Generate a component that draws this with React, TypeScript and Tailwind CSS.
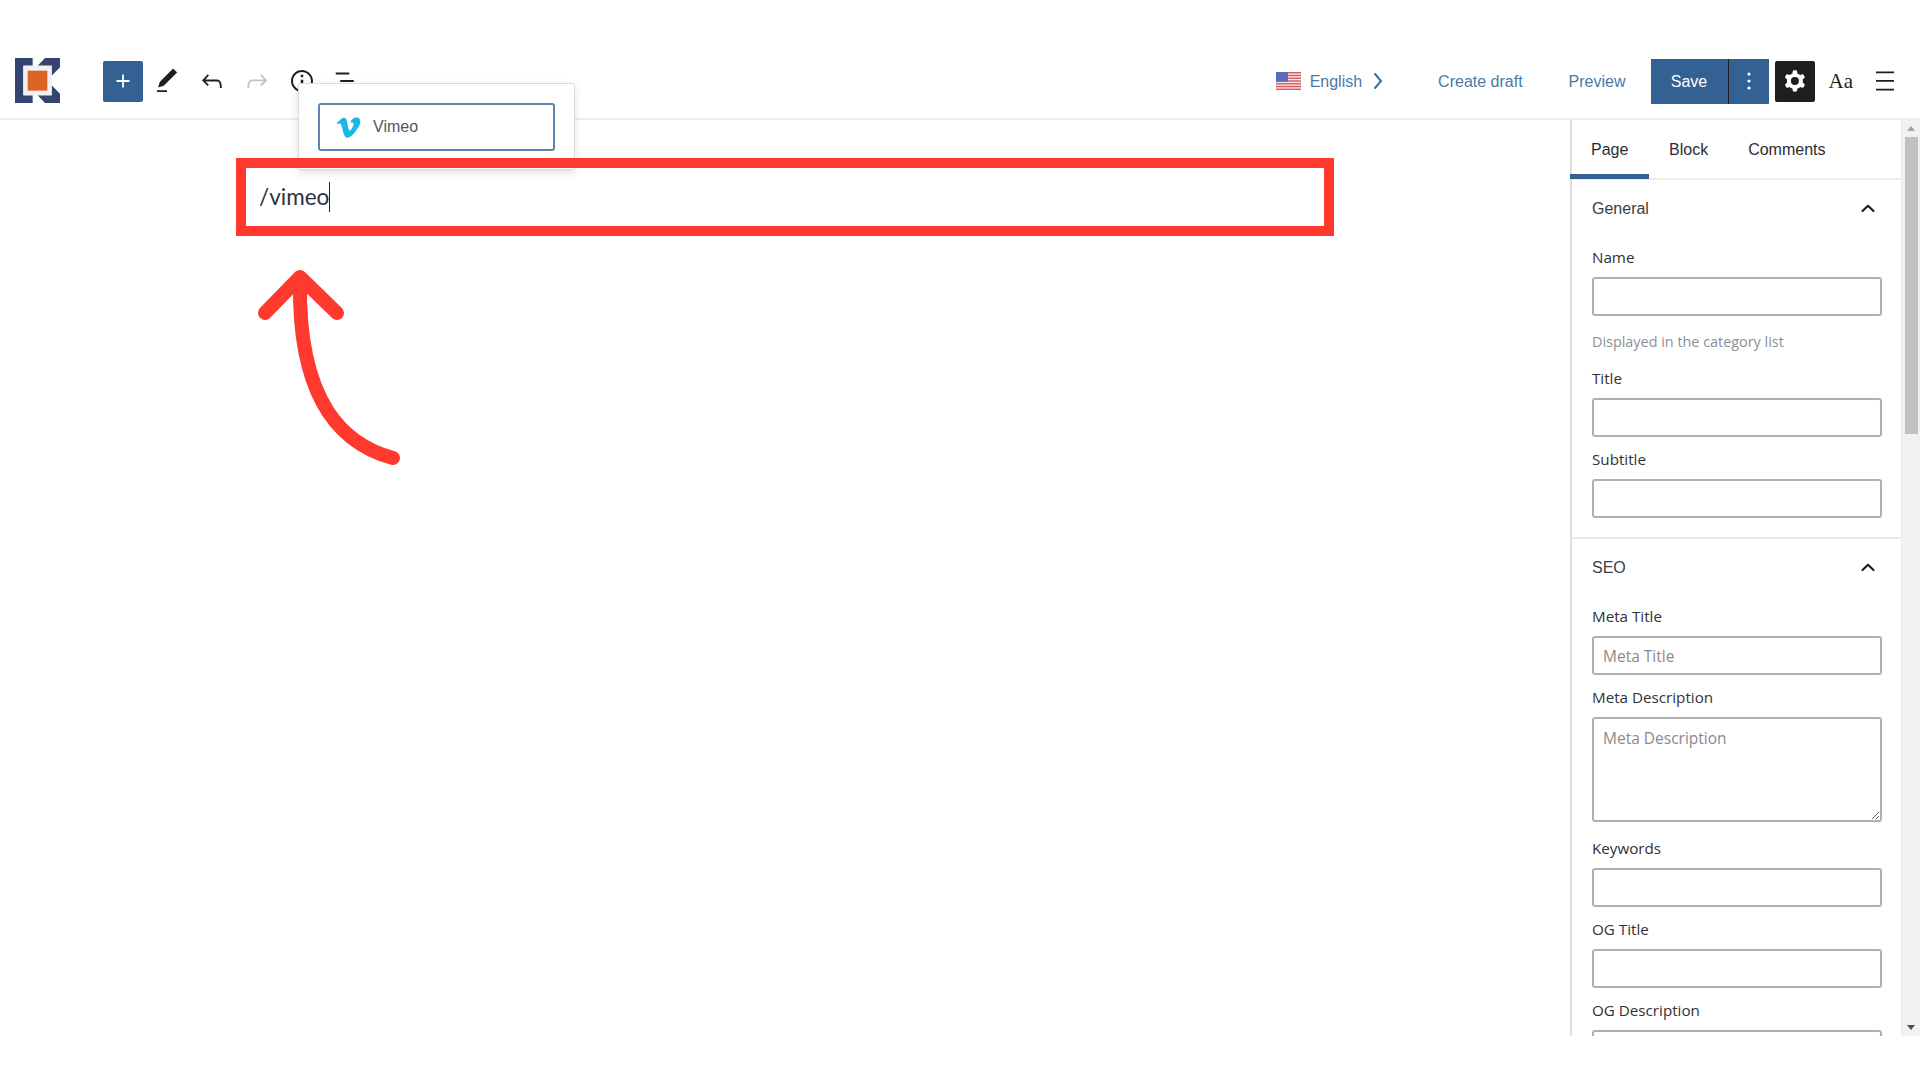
import { FaVimeoV } from "react-icons/fa";

const ink = "#1e1e1e";

function WpIcon({ d, color = ink, size = 30 }: { d: string; color?: string; size?: number }) {
  return (
    <svg width={size} height={size} viewBox="0 0 24 24" fill={color} fillRule="evenodd">
      <path d={d} />
    </svg>
  );
}

const toolbarIcons = [
  { d: "M20.1 5.1L16.9 2 6.2 12.7l-1.3 4.4 4.5-1.3L20.1 5.1zM4 20.8h8v-1.5H4v1.5z", color: ink },
  { d: "M18.3 11.7c-.6-.6-1.4-.9-2.3-.9H6.7l2.9-3.3-1.1-1-4.5 5L8.5 16l1-1-2.7-2.7H16c.5 0 .9.2 1.3.5 1 1 1 3.4 1 4.5v.3h1.5v-.2c0-1.5 0-4.3-1.5-5.7z", color: ink },
  { d: "M15.6 6.5l-1.1 1 2.9 3.3H8c-.9 0-1.7.3-2.3.9-1.4 1.5-1.4 4.2-1.4 5.6v.2h1.5v-.3c0-1.1 0-3.5 1-4.5.3-.3.7-.5 1.3-.5h9.2L14.5 15l1.1 1.1 4.6-4.6-4.6-5z", color: "#c4c4c4" },
  { d: "M12 3.2c-4.8 0-8.8 3.9-8.8 8.8 0 4.8 3.9 8.8 8.8 8.8 4.8 0 8.8-3.9 8.8-8.8 0-4.8-4-8.8-8.8-8.8zm0 16c-4 0-7.2-3.3-7.2-7.2C4.8 8 8 4.8 12 4.8s7.2 3.3 7.2 7.2c0 4-3.2 7.2-7.2 7.2zM11 17h2v-6h-2v6zm0-8h2V7h-2v2z", color: ink },
  { d: "M13.8 5.2H3v1.5h10.8V5.2zm-3.6 12v1.5H21v-1.5H10.2zm7.2-6H6.6v1.5h10.8v-1.5z", color: ink },
];

const cog =
  "M10.289 4.836A1 1 0 0111.275 4h1.306a1 1 0 01.987.836l.244 1.466c.787.26 1.503.679 2.108 1.218l1.393-.522a1 1 0 011.216.437l.653 1.13a1 1 0 01-.23 1.273l-1.148.944a6.025 6.025 0 010 2.435l1.149.946a1 1 0 01.23 1.272l-.653 1.13a1 1 0 01-1.216.437l-1.394-.522c-.605.54-1.32.958-2.108 1.218l-.244 1.466a1 1 0 01-.987.836h-1.306a1 1 0 01-.986-.836l-.244-1.466a5.995 5.995 0 01-2.108-1.218l-1.394.522a1 1 0 01-1.217-.436l-.653-1.131a1 1 0 01.23-1.272l1.149-.946a6.026 6.026 0 010-2.435l-1.148-.944a1 1 0 01-.23-1.272l.653-1.131a1 1 0 011.217-.437l1.393.522a5.994 5.994 0 012.108-1.218l.244-1.466zM14.929 12a3 3 0 11-6 0 3 3 0 016 0z";

function Logo() {
  return (
    <svg width="45" height="45" viewBox="0 0 135 135" className="mb-[2px] shrink-0">
      <path d="M0 0H53V23H25V112H53V135H0Z" fill="#34446e" />
      <path d="M68 23L90 0H135V28L110 53V23Z" fill="#34446e" />
      <path d="M110 82L135 107V135H90L68 112H110Z" fill="#34446e" />
      <rect x="25" y="23" width="85" height="89" fill="#f1f1f4" />
      <rect x="38" y="38" width="59" height="60" fill="#dd6427" />
    </svg>
  );
}

function Flag() {
  return (
    <svg width="25" height="18" viewBox="0 0 25 18" className="shrink-0">
      <rect width="25" height="18" rx="1" fill="#f1e9e9" />
      {[0, 2.77, 5.54, 8.31, 11.08, 13.85, 16.62].map((y) => (
        <rect key={y} y={y} width="25" height="1.38" fill="#d9575f" />
      ))}
      <rect width="12" height="9.7" fill="#5a6dbd" />
    </svg>
  );
}

function Chevron() {
  return (
    <svg width="16" height="16" viewBox="0 0 16 16" fill="none" stroke={ink} strokeWidth="2.2" strokeLinecap="round" strokeLinejoin="round">
      <path d="M2.5 10L8 4.8L13.5 10" />
    </svg>
  );
}

function Field({ label, placeholder, mb = "mb-[12px]" }: { label: string; placeholder?: string; mb?: string }) {
  return (
    <div className={mb}>
      <div className="mb-[10px] h-5 text-[15.2px] leading-5 text-[#2f3237]">{label}</div>
      <input
        readOnly
        placeholder={placeholder}
        className="block h-[39px] w-[290px] rounded-[3px] border-2 border-[#b0b0b0] bg-white px-[9px] text-[15.5px] outline-none placeholder:text-[#8a8a8a]"
      />
    </div>
  );
}

export default function App() {
  return (
    <div className="flex h-[1080px] w-[1920px] flex-col overflow-hidden bg-white font-['Liberation_Sans',sans-serif]">
      {/* top bar */}
      <header className="flex h-[120px] shrink-0 items-center border-b-2 border-[#ececec] pt-[44px] pl-[15px]">
        <Logo />
        <button className="ml-[43px] flex h-[41px] w-[40px] items-center justify-center rounded-[2px] bg-[#346193] text-white">
          <svg width="24" height="24" viewBox="0 0 24 24" fill="white">
            <path d="M11.1 5.5h1.8v5.6h5.6v1.8h-5.6v5.6h-1.8v-5.6H5.5v-1.8h5.6z" />
          </svg>
        </button>
        <div className="ml-[1px] flex items-center">
          {toolbarIcons.map((icon, i) => (
            <div key={i} className="flex h-[41px] w-[45px] items-center justify-center">
              <WpIcon d={icon.d} color={icon.color} />
            </div>
          ))}
        </div>

        <div className="ml-auto flex items-center">
          <Flag />
          <span className="mt-[1px] ml-[9px] text-[16px] text-[#4d78a6]">English</span>
          <svg width="12" height="18" viewBox="0 0 12 18" fill="none" stroke="#3f6c9c" strokeWidth="2" strokeLinecap="round" className="ml-[10px]">
            <path d="M3 2L9 9L3 16" />
          </svg>
          <span className="mt-[1px] ml-[54px] text-[16px] text-[#4d78a6]">Create draft</span>
          <span className="mt-[1px] ml-[46px] text-[16px] text-[#4d78a6]">Preview</span>
          <div className="ml-[25px] flex h-[45px] bg-[#346193] text-white">
            <span className="flex w-[78px] items-center justify-center border-r border-[#1e1e1e] pt-[1px] text-[16px]">Save</span>
            <span className="flex w-[40px] items-center justify-center">
              <svg width="4" height="20" viewBox="0 0 4 20" fill="white">
                <circle cx="2" cy="3" r="1.6" />
                <circle cx="2" cy="10" r="1.6" />
                <circle cx="2" cy="17" r="1.6" />
              </svg>
            </span>
          </div>
          <div className="ml-[6px] flex h-[41px] w-[40px] items-center justify-center rounded-[2px] bg-[#1e1e1e]">
            <WpIcon d={cog} color="white" size={32} />
          </div>
          <span className="ml-[14px] font-['Liberation_Serif',serif] text-[21px] leading-none text-[#1e1e1e]">Aa</span>
          <svg width="24" height="24" viewBox="0 0 24 24" fill={ink} className="mr-[23px] ml-[20px]">
            <path d="M3 2.5h18v1.7H3zM3 11.1h18v1.7H3zM3 19.8h18v1.7H3z" />
          </svg>
        </div>
      </header>

      <div className="flex h-[916px] shrink-0">
        {/* editor canvas */}
        <main className="relative flex-1 pt-[62px] pl-[259px]">
          <div className="w-fit border-r border-[#1e1e1e] font-['Lato',sans-serif] text-[22.5px] leading-[30px] text-[#2d3142]">/vimeo</div>

          <div className="absolute top-[-37px] left-[298px] h-[87px] w-[277px] rounded-[2px] border border-[#dcdcdc] bg-white pt-[19px] pl-[19px] shadow-[0_3px_8px_rgba(0,0,0,0.12)]">
            <div className="flex h-[48px] w-[237px] items-center rounded-[3px] border-2 border-[#5f86ae] pl-[15px]">
              <FaVimeoV className="text-[#1ab7ea]" size={27} />
              <span className="ml-[11px] text-[16px] text-[#555]">Vimeo</span>
            </div>
          </div>

          {/* red annotation */}
          <div className="pointer-events-none absolute top-[38px] left-[236px] h-[78px] w-[1098px] border-[10px] border-[#ff392e]" />
          <svg className="pointer-events-none absolute top-[140px] left-[250px]" width="160" height="210" viewBox="250 260 160 210" fill="none" stroke="#ff392e" strokeWidth="14" strokeLinecap="round" strokeLinejoin="round">
            <path d="M265 313L300 277L337 313" />
            <path d="M393 458C345 445 298 405 300 282" />
          </svg>
        </main>

        {/* settings sidebar */}
        <aside className="flex w-[350px] shrink-0 overflow-hidden">
          <div className="w-[332px] border-r border-l-2 border-r-[#ececec] border-l-[#e0e0e0]">
            <div className="flex h-[60px] border-b-2 border-[#ececec] pt-[2px] text-[16px] text-[#2b2d33]">
              <div className="relative flex w-[77px] items-center pl-[19px]">
                <span>Page</span>
                <div className="absolute right-0 bottom-[-1px] left-[-2px] h-[5px] bg-[#346193]" />
              </div>
              <div className="ml-[20px] flex items-center">Block</div>
              <div className="ml-[40px] flex items-center">Comments</div>
            </div>

            <section className="border-b-2 border-[#e9e9e9] px-[20px] pb-[19px] font-['Open_Sans',sans-serif]">
              <div className="flex h-[58px] items-center justify-between pr-[5px] font-['Liberation_Sans',sans-serif] text-[16px] text-[#3a3d42]">
                General
                <Chevron />
              </div>
              <div className="mt-[9px]">
                <div className="mb-[10px] h-5 text-[15.2px] leading-5 text-[#2f3237]">Name</div>
                <input readOnly className="block h-[39px] w-[290px] rounded-[3px] border-2 border-[#b0b0b0] outline-none" />
              </div>
              <div className="mt-[16px] mb-[16px] h-5 text-[14.4px] leading-5 text-[#8b8f94]">Displayed in the category list</div>
              <Field label="Title" />
              <Field label="Subtitle" mb="mb-0" />
            </section>

            <section className="px-[20px] font-['Open_Sans',sans-serif]">
              <div className="flex h-[57px] items-center justify-between pr-[5px] font-['Liberation_Sans',sans-serif] text-[16px] text-[#3a3d42]">
                SEO
                <Chevron />
              </div>
              <div className="mt-[10px]">
                <Field label="Meta Title" placeholder="Meta Title" />
              </div>
              <div className="mb-[16px]">
                <div className="mb-[10px] h-5 text-[15.2px] leading-5 text-[#2f3237]">Meta Description</div>
                <textarea
                  readOnly
                  placeholder="Meta Description"
                  className="block h-[105px] w-[290px] rounded-[3px] border-2 border-[#b0b0b0] px-[9px] py-[9px] text-[15.5px] leading-5 outline-none placeholder:text-[#8a8a8a]"
                />
              </div>
              <Field label="Keywords" />
              <Field label="OG Title" />
              <Field label="OG Description" />
            </section>
          </div>

          {/* scrollbar */}
          <div className="flex w-[18px] shrink-0 flex-col items-center bg-[#f1f1f1]">
            <div className="mt-[6px] h-0 w-0 border-x-[4px] border-b-[5px] border-x-transparent border-b-[#a3a3a3]" />
            <div className="mt-[6px] h-[297px] w-[13px] bg-[#c1c1c1]" />
            <div className="mt-auto mb-[6px] h-0 w-0 border-x-[4px] border-t-[5px] border-x-transparent border-t-[#505050]" />
          </div>
        </aside>
      </div>
    </div>
  );
}
